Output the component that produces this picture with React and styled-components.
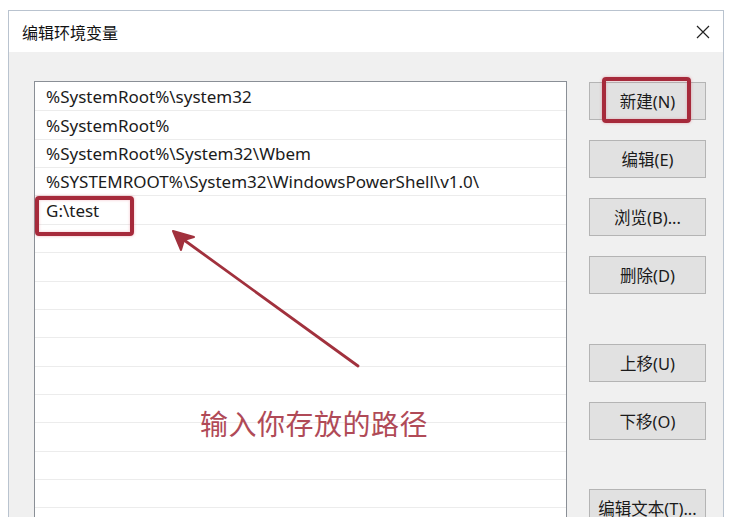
import React from 'react'
import styled, { createGlobalStyle } from 'styled-components'

const paths = [
  '%SystemRoot%\\system32',
  '%SystemRoot%',
  '%SystemRoot%\\System32\\Wbem',
  '%SYSTEMROOT%\\System32\\WindowsPowerShell\\v1.0\\',
  'G:\\test',
  '', '', '', '', '', '', '', '', '', '', '', '',
]

const buttons = [
  { label: '新建(N)' },
  { label: '编辑(E)' },
  { label: '浏览(B)...' },
  { label: '删除(D)' },
  { label: '上移(U)', space: 50 },
  { label: '下移(O)' },
  { label: '编辑文本(T)...', space: 49 },
]

const GlobalStyle = createGlobalStyle`
  body {
    margin: 0;
    background: #ffffff;
    font-family: "Noto Sans", "Noto Sans CJK SC", sans-serif;
  }
`

const App = () => {
  return (
    <Page>
      <GlobalStyle />
      <Window>
        <TitleBar>
          <Title>编辑环境变量</Title>
          <svg width="14" height="14" viewBox="0 0 14 14">
            <path d="M1 1 L13 13 M13 1 L1 13" stroke="#222" strokeWidth="1.2" fill="none" />
          </svg>
        </TitleBar>
        <Body>
          <ListBox>
            {paths.map((p, i) => (
              <Row key={i}>{p}</Row>
            ))}
          </ListBox>
          <ButtonColumn>
            {buttons.map((b) => (
              <Button key={b.label} $space={b.space}>{b.label}</Button>
            ))}
          </ButtonColumn>
        </Body>
      </Window>

      <Highlight $left={35} $top={196} $width={99} $height={40} />
      <Highlight $left={602} $top={77} $width={89} $height={46} />

      <Arrow width="732" height="517" viewBox="0 0 732 517">
        <line x1="358" y1="366" x2="184" y2="240" stroke="#a1313d" strokeWidth="2.8" strokeLinecap="round" />
        <path d="M173 231 L194 237 L184 240 L181 250 Z" fill="#a1313d" stroke="#a1313d" strokeWidth="2" strokeLinejoin="round" />
      </Arrow>

      <Note>输入你存放的路径</Note>
    </Page>
  )
}

const Page = styled.div`
  position: relative;
  width: 732px;
  height: 517px;
  overflow: hidden;
  padding: 10px 0 0 8px;
  box-sizing: border-box;
`

const Window = styled.div`
  width: 716px;
  height: 520px;
  box-sizing: border-box;
  border: 1px solid #b9c3cf;
  border-bottom: none;
  background: #f0f0f0;
  overflow: hidden;
`

const TitleBar = styled.div`
  height: 41px;
  background: #ffffff;
  display: flex;
  align-items: center;
  justify-content: space-between;
  padding: 0 13px 0 13px;
`

const Title = styled.div`
  font-family: "Noto Sans CJK SC", sans-serif;
  font-size: 16px;
  color: #111;
`

const Body = styled.div`
  display: flex;
  align-items: flex-start;
  gap: 22px;
  padding: 29px 0 0 25px;
`

const ListBox = styled.div`
  width: 533px;
  height: 470px;
  box-sizing: border-box;
  border: 1px solid #8a8f96;
  background: #ffffff;
  padding-top: 1px;
`

const Row = styled.div`
  height: 28.36px;
  box-sizing: border-box;
  border-bottom: 1px solid #ececec;
  padding-left: 11px;
  display: flex;
  align-items: center;
  font-size: 17px;
  color: #1b1b1b;
  white-space: nowrap;
`

const ButtonColumn = styled.div`
  display: flex;
  flex-direction: column;
  gap: 20px;
  padding-top: 1px;
`

const Button = styled.div`
  width: 117px;
  height: 38px;
  box-sizing: border-box;
  margin-top: ${(p) => (p.$space ? p.$space - 20 : 0)}px;
  border: 1px solid #b4b4b4;
  background: #e1e1e1;
  display: flex;
  align-items: center;
  justify-content: center;
  font-size: 16.5px;
  color: #1b1b1b;
  white-space: nowrap;
`

const Highlight = styled.div`
  position: absolute;
  left: ${(p) => p.$left}px;
  top: ${(p) => p.$top}px;
  width: ${(p) => p.$width}px;
  height: ${(p) => p.$height}px;
  box-sizing: border-box;
  border: 4px solid #a62a3b;
  border-radius: 4px;
  box-shadow: 0 0 3px rgba(220, 80, 100, 0.45), inset 0 0 3px rgba(220, 80, 100, 0.35);
`

const Arrow = styled.svg`
  position: absolute;
  left: 0;
  top: 0;
  pointer-events: none;
`

const Note = styled.div`
  position: absolute;
  left: 200px;
  top: 403px;
  font-family: "Noto Sans CJK SC", sans-serif;
  font-size: 28px;
  line-height: 40px;
  color: #b04a57;
  letter-spacing: 0.5px;
`

export default App
